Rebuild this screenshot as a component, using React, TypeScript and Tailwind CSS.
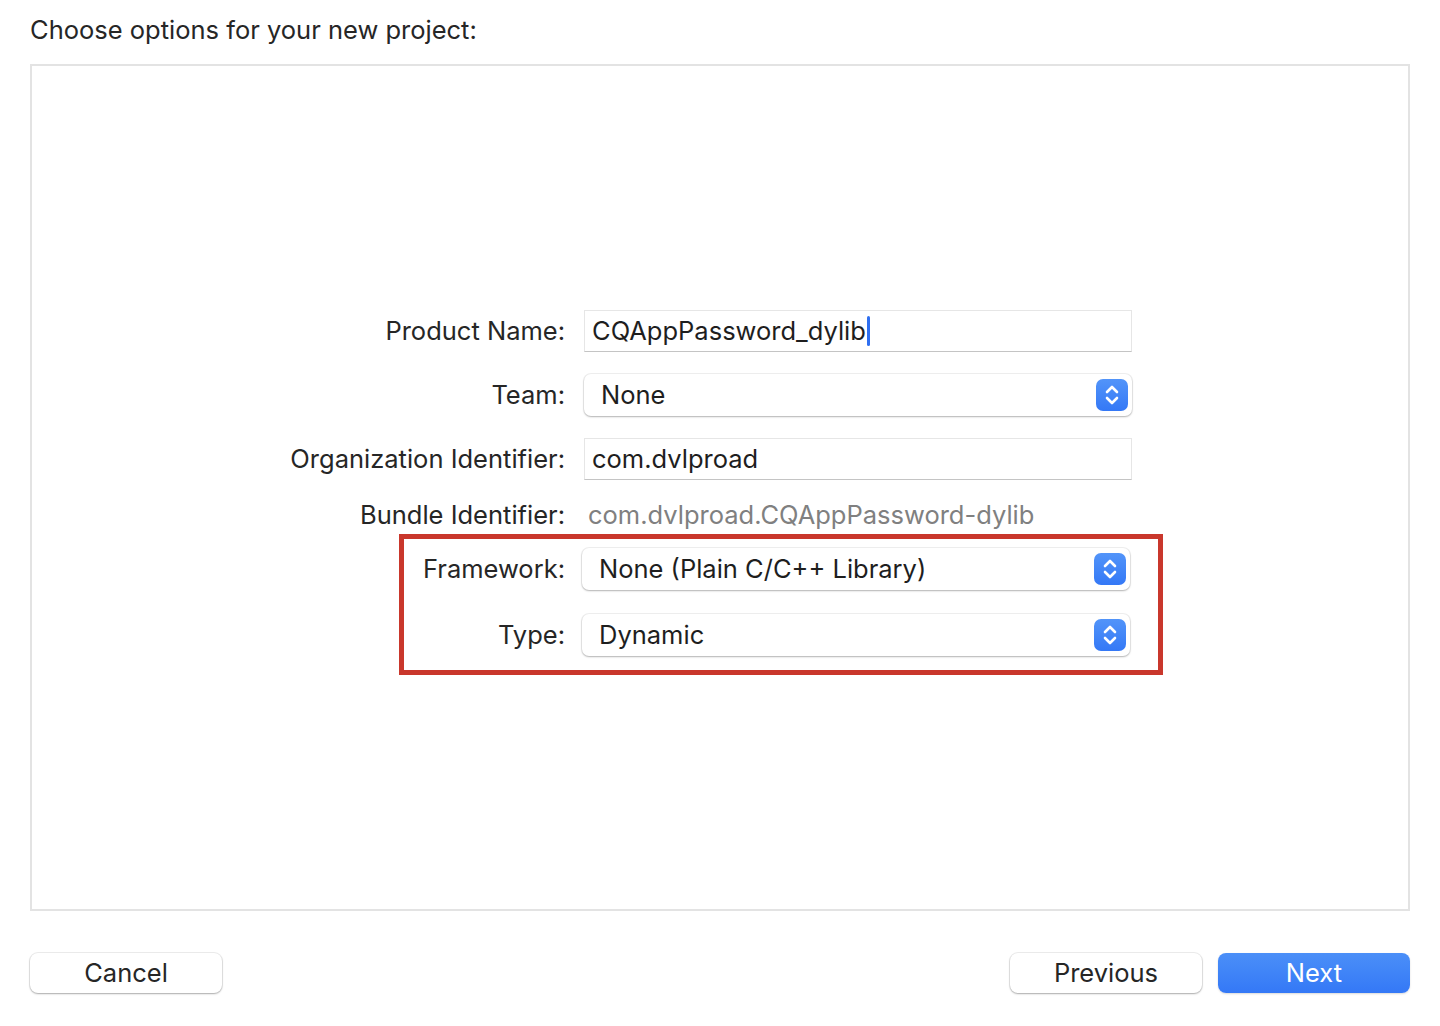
import React from "react"

function Stepper() {
  return (
    <div className="flex h-[32px] w-[32px] items-center justify-center rounded-[7px] bg-gradient-to-b from-[#5294f9] to-[#3478f6]">
      <svg width="18" height="26" viewBox="0 0 18 26" fill="none">
        <path d="M4 10 L9 5 L14 10" stroke="white" strokeWidth="2.6" strokeLinecap="round" strokeLinejoin="round" />
        <path d="M4 16 L9 21 L14 16" stroke="white" strokeWidth="2.6" strokeLinecap="round" strokeLinejoin="round" />
      </svg>
    </div>
  )
}

function Label({ children }: { children: React.ReactNode }) {
  return <div className="text-right text-[25.5px] leading-[34px] text-[#262626]">{children}</div>
}

function TextField({ value, caret }: { value: string; caret?: boolean }) {
  return (
    <div className="flex h-[42px] items-center border border-[#e6e6e6] border-b-[#c4c4c4] bg-white pl-[7px] text-[25.5px] text-[#1e1e1e]">
      <span>{value}</span>
      {caret && <span className="ml-[1px] inline-block h-[30px] w-[3px] rounded-sm bg-[#2f6ff0]" />}
    </div>
  )
}

function Popup({ value }: { value: string }) {
  return (
    <div className="flex h-[42px] items-center justify-between rounded-[7px] bg-white pl-[17px] pr-[4px] text-[25.5px] text-[#1e1e1e] shadow-[0_0_0_1px_rgba(0,0,0,0.06),0_1px_2px_rgba(0,0,0,0.25)]">
      <span>{value}</span>
      <Stepper />
    </div>
  )
}

function MacButton({ children, primary }: { children: React.ReactNode; primary?: boolean }) {
  return (
    <button
      className={
        primary
          ? "flex h-[40px] w-[192px] items-center justify-center rounded-[8px] bg-gradient-to-b from-[#4b8ff8] to-[#3478f6] text-[25.5px] text-white shadow-[0_1px_2px_rgba(0,0,0,0.15)]"
          : "flex h-[40px] w-[192px] items-center justify-center rounded-[8px] bg-white text-[25.5px] text-[#262626] shadow-[0_0_0_1px_rgba(0,0,0,0.07),0_1px_2px_rgba(0,0,0,0.28)]"
      }
    >
      {children}
    </button>
  )
}

export default function App() {
  return (
    <div className="h-[1026px] w-[1440px] bg-white px-[30px] pt-[13px] font-['Inter','Liberation_Sans',sans-serif] antialiased">
      <h1 className="text-[25.5px] leading-[34px] text-[#262626]">Choose options for your new project:</h1>

      <div className="mt-[17px] flex h-[847px] flex-col border-2 border-[#e3e3e3] pt-[244px]">
        <div className="grid grid-cols-[533px_548px] items-center gap-x-[19px] gap-y-[22px]">
          <Label>Product Name:</Label>
          <TextField value="CQAppPassword_dylib" caret />
          <Label>Team:</Label>
          <Popup value="None" />
          <Label>Organization Identifier:</Label>
          <TextField value="com.dvlproad" />
          <div className="-mt-[4px]">
            <Label>Bundle Identifier:</Label>
          </div>
          <div className="-mt-[4px] pl-[4px] text-[25.5px] leading-[34px] text-[#808080]">
            com.dvlproad.CQAppPassword-dylib
          </div>
        </div>

        <div className="ml-[367px] mt-[2px] w-[764px] border-[5px] border-[#c9372c] pb-[14px] pt-[9px]">
          <div className="grid grid-cols-[161px_548px] items-center gap-x-[17px] gap-y-[24px]">
            <Label>Framework:</Label>
            <Popup value="None (Plain C/C++ Library)" />
            <Label>Type:</Label>
            <Popup value="Dynamic" />
          </div>
        </div>
      </div>

      <div className="mt-[42px] flex items-center">
        <MacButton>Cancel</MacButton>
        <div className="flex-1" />
        <MacButton>Previous</MacButton>
        <div className="w-[16px]" />
        <MacButton primary>Next</MacButton>
      </div>
    </div>
  )
}
